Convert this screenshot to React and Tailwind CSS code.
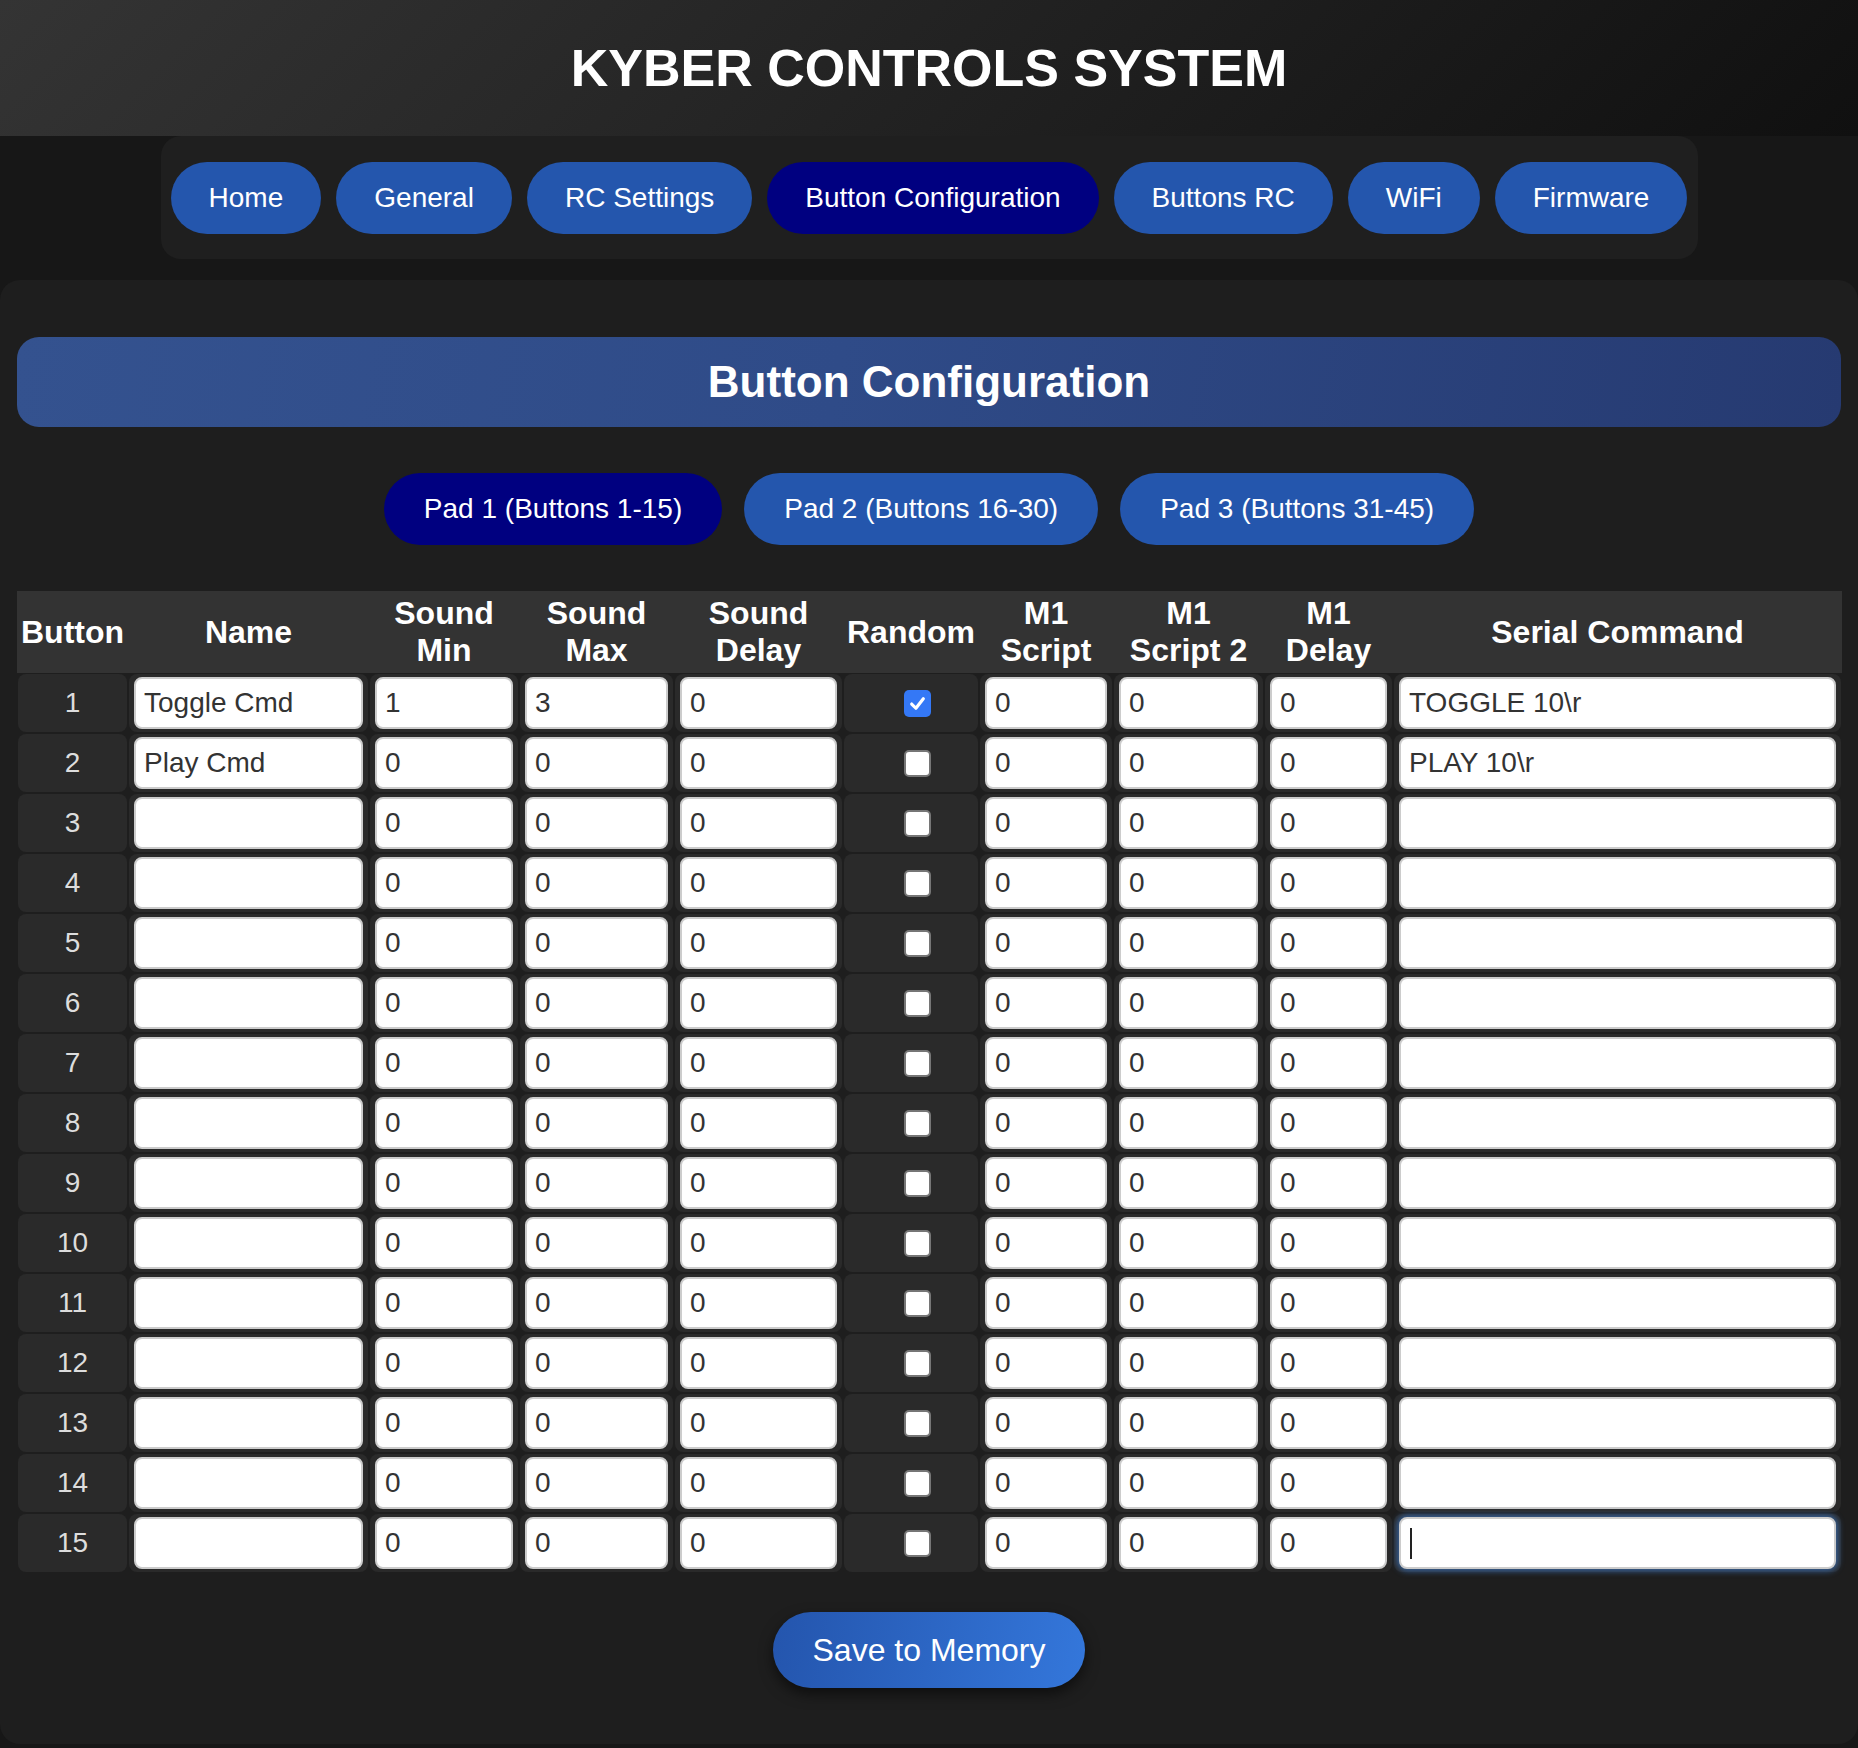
import React from "react";

const navItems = ["Home", "General", "RC Settings", "Button Configuration", "Buttons RC", "WiFi", "Firmware"];
const pads = ["Pad 1 (Buttons 1-15)", "Pad 2 (Buttons 16-30)", "Pad 3 (Buttons 31-45)"];

const rows = Array.from({ length: 15 }, (_, i) => ({
  n: i + 1,
  name: i === 0 ? "Toggle Cmd" : i === 1 ? "Play Cmd" : "",
  min: i === 0 ? "1" : "0",
  max: i === 0 ? "3" : "0",
  random: i === 0,
  serial: i === 0 ? "TOGGLE 10\\r" : i === 1 ? "PLAY 10\\r" : "",
}));

const Field = ({ value, focused }) => (
  <div className="relative">
    <input
      readOnly
      value={value}
      className={
        "block w-full h-[52px] rounded-[8px] border-2 border-[#cccccc] bg-white px-2 text-[28px] text-[#333] outline-none font-['Liberation_Sans',Arial,sans-serif]" +
        (focused ? " shadow-[0_0_6px_2px_rgba(58,110,180,0.85)]" : "")
      }
    />
    {focused && <span className="absolute left-[11px] top-[11px] w-[2px] h-[31px] bg-[#222]" />}
  </div>
);

const Check = ({ checked }) =>
  checked ? (
    <span className="w-[27px] h-[27px] rounded-[5px] bg-[#3478f6] flex items-center justify-center">
      <svg width="19" height="19" viewBox="0 0 18 18">
        <path d="M3.5 9.5 L7.5 13.5 L14.5 4.5" fill="none" stroke="white" strokeWidth="3" strokeLinecap="round" strokeLinejoin="round" />
      </svg>
    </span>
  ) : (
    <span className="w-[27px] h-[27px] rounded-[5px] bg-white border-2 border-[#767676]" />
  );

const Cell = ({ children, className = "" }) => (
  <div className={"m-[1px] rounded-[8px] bg-[#2a2a2a] px-[5px] py-[3px] " + className}>{children}</div>
);

const Th = ({ children }) => (
  <div className="bg-[#333] py-1 flex items-center justify-center text-center text-[32px] leading-[37px] font-bold text-white">
    {children}
  </div>
);

export default function App() {
  return (
    <div className="min-h-screen bg-[#171717] font-['Liberation_Sans',Arial,sans-serif]">
      <header className="h-[136px] flex items-center justify-center bg-[linear-gradient(135deg,#343434_0%,#101010_100%)]">
        <h1 className="text-[52px] font-bold text-white">KYBER CONTROLS SYSTEM</h1>
      </header>

      <nav className="mx-auto w-[1537px] bg-[#1f1f1f] rounded-[20px] pt-[26px] pb-[25px] flex justify-center gap-[15px]">
        {navItems.map((item) => (
          <button
            key={item}
            className={
              "shrink-0 whitespace-nowrap h-[72px] rounded-full px-[38px] text-[28px] text-white " +
              (item === "Button Configuration" ? "bg-[#000080]" : "bg-[#2456ad]")
            }
          >
            {item}
          </button>
        ))}
      </nav>

      <main className="mt-[21px] bg-[#1e1e1e] rounded-[20px] px-[17px] pt-[57px] pb-[56px]">
        <div className="h-[90px] rounded-[22px] flex items-center justify-center bg-[linear-gradient(100deg,#34528f_0%,#2f4b88_45%,#263a71_100%)]">
          <h2 className="text-[44px] font-bold text-white">Button Configuration</h2>
        </div>

        <div className="mt-[46px] flex justify-center gap-[22px]">
          {pads.map((p, i) => (
            <button
              key={p}
              className={"shrink-0 whitespace-nowrap h-[72px] rounded-full px-10 text-[28px] text-white " + (i === 0 ? "bg-[#000080]" : "bg-[#2456ad]")}
            >
              {p}
            </button>
          ))}
        </div>

        <div className="mt-[46px] grid grid-cols-[111px_241px_150px_155px_169px_136px_134px_151px_129px_449px]">
          <Th>Button</Th>
          <Th>Name</Th>
          <Th>Sound<br />Min</Th>
          <Th>Sound<br />Max</Th>
          <Th>Sound<br />Delay</Th>
          <Th>Random</Th>
          <Th>M1<br />Script</Th>
          <Th>M1<br />Script 2</Th>
          <Th>M1<br />Delay</Th>
          <Th>Serial Command</Th>

          {rows.map((r) => (
            <React.Fragment key={r.n}>
              <Cell className="flex items-center justify-center text-[28px] text-[#ddd]">{r.n}</Cell>
              <Cell><Field value={r.name} /></Cell>
              <Cell><Field value={r.min} /></Cell>
              <Cell><Field value={r.max} /></Cell>
              <Cell><Field value="0" /></Cell>
              <Cell className="flex items-center justify-center pl-[18px]"><Check checked={r.random} /></Cell>
              <Cell><Field value="0" /></Cell>
              <Cell><Field value="0" /></Cell>
              <Cell><Field value="0" /></Cell>
              <Cell><Field value={r.serial} focused={r.n === 15} /></Cell>
            </React.Fragment>
          ))}
        </div>

        <div className="mt-[39px] flex justify-center">
          <button className="h-[76px] rounded-full px-10 text-[32px] text-white bg-[linear-gradient(100deg,#2455ad_0%,#3477db_100%)] shadow-[0_6px_14px_rgba(0,0,0,0.55)]">
            Save to Memory
          </button>
        </div>
      </main>
    </div>
  );
}
